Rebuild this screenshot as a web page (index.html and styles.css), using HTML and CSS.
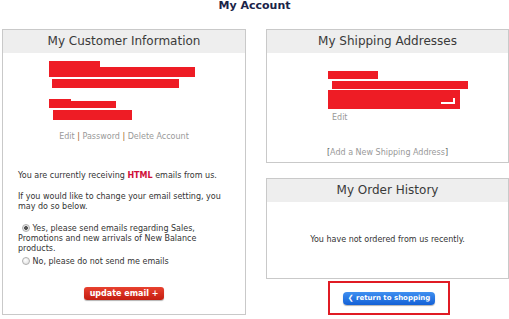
FILE: index.html
```html
<!DOCTYPE html>
<html lang="en">
<head>
  <meta charset="UTF-8" />
  <title>My Account</title>
  <meta name="viewport" content="width=device-width, initial-scale=1.0" />
  <link rel="stylesheet" href="styles.css">
</head>
<body>
  <h1 class="page-title">My Account</h1>

  <div class="account">
    <!-- customer info -->
    <div class="panel panel-info">
      <div class="panel-head">My Customer Information</div>
      <div class="panel-body">
        <div class="redacted info-redact">
          <div class="bar bar-1"></div>
          <div class="bar bar-2"></div>
          <div class="bar bar-3"></div>
          <div class="bar bar-4"></div>
          <div class="bar bar-5"></div>
          <div class="bar bar-6"></div>
        </div>

        <p class="links">
          <a href="#">Edit</a> <span class="sep">|</span> <a href="#">Password</a> <span class="sep">|</span> <a href="#">Delete Account</a>
        </p>

        <p class="note first">You are currently receiving <strong>HTML</strong> emails from us.</p>
        <p class="note">If you would like to change your email setting, you may do so below.</p>

        <form class="email-form" onsubmit="return false">
          <label class="opt"><input type="radio" name="email" checked> Yes, please send emails regarding Sales, Promotions and new arrivals of New Balance products.</label>
          <label class="opt"><input type="radio" name="email"> No, please do not send me emails</label>
          <div class="form-actions">
            <button class="btn-red" type="submit">update email +</button>
          </div>
        </form>
      </div>
    </div>

    <div class="side">
      <!-- shipping -->
      <div class="panel panel-ship">
        <div class="panel-head">My Shipping Addresses</div>
        <div class="panel-body">
          <div class="redacted ship-redact">
            <div class="bar bar-a"></div>
            <div class="bar bar-b"></div>
            <div class="bar bar-c"></div>
          </div>
          <a class="ship-edit" href="#">Edit</a>
          <p class="add-ship">[<a href="#">Add a New Shipping Address</a>]</p>
        </div>
      </div>

      <!-- orders -->
      <div class="panel panel-orders">
        <div class="panel-head">My Order History</div>
        <div class="panel-body">
          <p class="empty">You have not ordered from us recently.</p>
        </div>
      </div>

      <div class="return-wrap">
        <button class="btn-blue" type="button"><span class="chev">&#10094;</span> return to shopping</button>
      </div>
    </div>
  </div>
</body>
</html>
```

FILE: styles.css
```css
body {
  margin: 0;
  font-family: "DejaVu Sans", Verdana, sans-serif;
  font-size: 8px;
  color: #333;
  background: #fff;
}

a {
  color: #999;
  text-decoration: none;
}

.page-title {
  margin: 0 0 17px;
  font-size: 11px;
  line-height: 12px;
  text-align: center;
  color: #1b2448;
}

.account {
  display: grid;
  grid-template-columns: 244px 243px;
  column-gap: 20px;
  padding-left: 2px;
}

.panel {
  border: 1px solid #c9c9c9;
  background: #fff;
}

.panel-head {
  height: 23px;
  line-height: 23px;
  background: #eee;
  text-align: center;
  font-size: 12px;
  color: #3a3a3a;
}

/* redaction bars */
.redacted {
  display: flex;
  flex-direction: column;
  align-items: flex-start;
}

.bar {
  background: #ee1c25;
}

.info-redact {
  padding: 8px 0 0 46px;
}

.bar-1 { width: 51px; height: 6px; }
.bar-2 { width: 146px; height: 10px; }
.bar-3 { width: 127px; height: 9px; margin: 2px 0 0 3px; }
.bar-4 { width: 22px; height: 2px; margin-top: 11px; }
.bar-5 { width: 67px; height: 7px; }
.bar-6 { width: 79px; height: 10px; margin: 2px 0 0 4px; }

.links {
  margin: 12px 0 0;
  line-height: 10px;
  text-align: center;
}

.sep {
  color: #a0642a;
}

.note {
  margin: 0;
  padding: 0 15px;
  line-height: 10px;
}

.note.first {
  margin: 29px 0 11px;
}

.note strong {
  color: #d0103a;
}

.email-form {
  margin-top: 12px;
  padding: 0 15px;
}

.opt {
  display: block;
  line-height: 10px;
  margin-bottom: 3px;
}

.opt input {
  appearance: none;
  width: 8px;
  height: 8px;
  margin: 0 0 0 4px;
  border: 1px solid #b0b0b0;
  border-radius: 50%;
  background: radial-gradient(circle at 40% 35%, #fff, #dcdcdc);
  vertical-align: -1px;
}

.opt input:checked {
  background: radial-gradient(circle, #555 0 1.6px, #e6e6e6 2.2px);
}

.form-actions {
  margin-top: 20px;
  text-align: center;
}

.btn-red {
  height: 13px;
  padding: 0 6px;
  border: none;
  border-radius: 3px;
  background: linear-gradient(#e8412f, #c41d10);
  box-shadow: 0 1px 1px rgba(0, 0, 0, 0.3);
  color: #fff;
  font-family: inherit;
  font-size: 8px;
  font-weight: bold;
  line-height: 13px;
}

.side {
  display: flex;
  flex-direction: column;
}

.panel-ship {
  height: 132px;
}

.ship-redact {
  padding: 18px 0 0 61px;
}

.bar-a { width: 50px; height: 8px; }
.bar-b { width: 136px; height: 8px; margin: 2px 0 0 4px; }
.bar-c {
  position: relative;
  width: 132px;
  height: 19px;
  margin-top: 1px;
}

.bar-c::after {
  content: "";
  position: absolute;
  right: 5px;
  bottom: 5px;
  width: 12px;
  height: 4px;
  border-right: 2px solid #fff;
  border-bottom: 2px solid #fff;
}

.ship-edit {
  display: block;
  margin: 4px 0 0 65px;
  line-height: 10px;
}

.add-ship {
  margin: 25px 0 0;
  line-height: 10px;
  text-align: center;
  color: #666;
}

.panel-orders {
  height: 99px;
  margin-top: 15px;
}

.empty {
  margin: 33px 0 0;
  line-height: 10px;
  text-align: center;
  color: #333;
}

.return-wrap {
  align-self: center;
  margin: 2px 0 0 3px;
  width: 118px;
  height: 30px;
  border: 2px solid #e01b24;
  display: flex;
  align-items: center;
  justify-content: center;
}

.btn-blue {
  height: 13px;
  padding: 0 5px;
  border: none;
  border-radius: 4px;
  background: linear-gradient(#3f8ff0, #1360d6);
  box-shadow: 0 1px 1px rgba(0, 0, 0, 0.3);
  color: #fff;
  font-family: inherit;
  font-size: 7px;
  font-weight: bold;
  line-height: 13px;
}

.chev {
  font-size: 7px;
}
```
